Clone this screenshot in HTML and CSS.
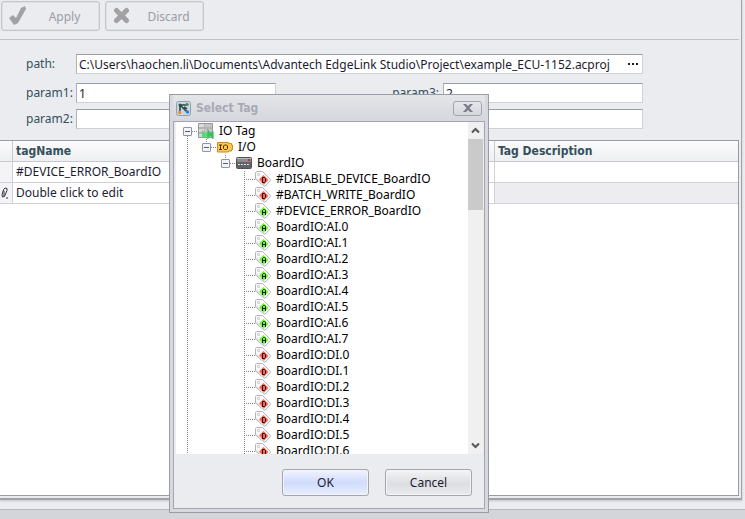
FILE: index.html
```html
<!DOCTYPE html>
<html lang="en">
<head>
<meta charset="utf-8">
<title>Select Tag</title>
<link rel="stylesheet" href="styles.css">
</head>
<body>
<svg class="defs" aria-hidden="true">
  <symbol id="tag" viewBox="0 0 17 16">
    <path d="M.5 1.500 1.500.5H7.500L15.500 8.500V9.500L10.500 15H9L.5 8Z" fill="#fafafa" stroke="#b4b4b4"/>
    <path d="M1.500 7.500 9.500 14" stroke="#d4d4d4"/>
    <circle cx="3.500" cy="3.500" r="1" fill="#fff" stroke="#bbb"/>
    <path d="M8.500 4 13.500 9 9 13.500 4 8.500Z" fill="currentColor"/>
  </symbol>
  <symbol id="tag-d" viewBox="0 0 17 16">
    <use href="#tag" width="17" height="16"/>
    <path d="M7.500 6.500h2l1 1v3l-1 1H7.500Z" fill="none" stroke="#200"/>
  </symbol>
  <symbol id="tag-a" viewBox="0 0 17 16">
    <use href="#tag" width="17" height="16"/>
    <path d="M7.500 12V7.500L8.500 6.500h1l1 1V12M7.500 9.500h3" fill="none" stroke="#020"/>
  </symbol>
</svg>
<main class="window">
  <header class="toolbar">
    <button class="tool" disabled>
      <svg width="18" height="20" viewBox="0 0 18 20"><path d="M1 12 5 9 8 12 13 2 17 0 18 3 10 17 6 19Z" fill="#a2a2a5"/></svg>
      <span>Apply</span>
    </button>
    <button class="tool" disabled>
      <svg width="18" height="20" viewBox="0 0 18 20"><path d="M4.500 4.500 14.500 14.500M14.500 4.500 4.500 14.500" stroke="#a2a2a5" stroke-width="5" stroke-linecap="round"/></svg>
      <span>Discard</span>
    </button>
  </header>
  <form class="form">
    <label for="path">path:</label>
    <div class="path-box">
      <input id="path" value="C:\Users\haochen.li\Documents\Advantech EdgeLink Studio\Project\example_ECU-1152.acproj">
      <button type="button" class="browse" aria-label="Browse"><svg width="11" height="3"><path d="M0 0h2v2H0zM4 0h2v2H4zM8 0h2v2H8z" fill="#1c1c30"/></svg></button>
    </div>
    <label for="p1">param1:</label><input class="box" id="p1" value="1">
    <label class="second" for="p3">param3:</label><input class="box" id="p3" value="2">
    <label for="p2">param2:</label><input class="box" id="p2">
    <label class="second" for="p4">param4:</label><input class="box" id="p4">
  </form>
  <section class="grid">
    <table>
      <colgroup><col class="c-mark"><col class="c-name"><col></colgroup>
      <thead><tr><th></th><th>tagName</th><th>Tag Description</th></tr></thead>
      <tbody>
        <tr><td></td><td>#DEVICE_ERROR_BoardIO</td><td></td></tr>
        <tr class="new"><td><svg width="8" height="12" viewBox="0 0 8 12"><path d="M2.500 2.500 4 1 6 1.500 6 3.500 3.500 9.500 1.500 10 1 8ZM3 3.500 3 9M5 11h2" fill="none" stroke="#333344"/></svg></td><td>Double click to edit</td><td></td></tr>
      </tbody>
    </table>
  </section>
</main>
<footer class="status"></footer>

<section class="dialog" role="dialog" aria-labelledby="title">
  <header class="title">
    <svg width="15" height="15" viewBox="0 0 15 15"><rect x=".5" y=".5" width="14" height="14" rx="2" fill="#c8d8e4" stroke="#90a0b0"/><path d="M4 10V4L10 4M5 5 11 11M8 6 11 8" fill="none" stroke="#34404c" stroke-width="1.600"/><circle cx="4" cy="4" r="1.500" fill="#285c34"/><circle cx="11" cy="3.500" r="1.600" fill="#3c8c3c"/><circle cx="3.600" cy="11.500" r="1.700" fill="#e8902c"/><circle cx="11.500" cy="11" r="1.700" fill="#2484c4"/></svg>
    <h1 id="title">Select Tag</h1>
    <button class="close" aria-label="Close"><svg width="10" height="8" viewBox="0 0 10 8"><path d="M0 0h3l2 2 2-2h3L6.500 4 10 8H7L5 6 3 8H0L3.500 4Z" fill="#7c7d88"/></svg></button>
  </header>
  <div class="content">
    <div class="viewport">
      <ul class="tree root" role="tree">
        <li class="open"><div class="row"><button class="toggle" aria-label="Collapse"></button>
          <svg width="17" height="16" viewBox="0 0 17 16"><path d="M.5.500h14v14H.5Z" fill="#b4b4b6" stroke="#98989a"/><path d="M1 1h5v3H1zM1 6h5v3H1zM1 11h5v3H1z" fill="#dadadc"/><path d="M7 1h7v3H7zM7 6h7v3H7zM7 11h7v3H7z" fill="#c6c6c8"/><path d="M5 14.500V9.500L9.500 14.500V10" fill="none" stroke="#4ce070" stroke-width="2.200"/><path d="M10.500 14.500V9L14.500 14V8.500" fill="none" stroke="#34c058" stroke-width="2.200"/></svg><span>IO Tag</span></div>
          <ul class="tree">
            <li class="open"><div class="row"><button class="toggle" aria-label="Collapse"></button>
              <svg width="17" height="16" viewBox="0 0 17 16"><path d="M.5 3.500h11v1h3v1.500h1v4.500h-1v1.500h-3v1H.5Z" fill="#fcc850" stroke="#d08c18"/><path d="M2 6h3M3.500 6v4.500M2 10.500h3M7.500 6h2l1 1v2.500l-1 1h-2l-1-1V7Z" fill="none" stroke="#503000"/></svg><span>I/O</span></div>
              <ul class="tree">
                <li class="open"><div class="row"><button class="toggle" aria-label="Collapse"></button>
                  <svg width="17" height="16" viewBox="0 0 17 16"><rect x=".5" y="2.500" width="15" height="11" rx="1" fill="#8c8d92" stroke="#505156"/><path d="M1 3.500h14" stroke="#b8b9be"/><path d="M1 7h14v6H1z" fill="#626368"/><path d="M2 9.500h2M5 9.500h2M8 9.500h2M11 9.500h2" stroke="#e2e2e4" stroke-width="1"/><path d="M12 4h2v2h-2z" fill="#e02424"/></svg><span>BoardIO</span></div>
                  <ul class="tree leaves" id="leaves"></ul>
                </li>
              </ul>
            </li>
          </ul>
        </li>
      </ul>
    </div>
    <div class="scroll">
      <button aria-label="Scroll up"><svg width="9" height="7" viewBox="0 0 9 7"><path d="M1 5.500 4.500 2 8 5.500" fill="none" stroke="#55565a" stroke-width="2"/></svg></button>
      <div class="thumb"></div>
      <button aria-label="Scroll down"><svg width="9" height="7" viewBox="0 0 9 7"><path d="M1 1.500 4.500 5 8 1.500" fill="none" stroke="#55565a" stroke-width="2"/></svg></button>
    </div>
    <div class="actions"><button class="btn primary">OK</button><button class="btn">Cancel</button></div>
  </div>
</section>
<script src="tree.js"></script>
</body>
</html>
```
FILE: styles.css
```css
* { box-sizing: border-box; }
body, input, button { font-family: Tahoma, "Noto Sans", sans-serif; font-size: 12px; color: #1c1c30; }
body { margin: 0; min-height: 100vh; display: flex; flex-direction: column; background: #ebecef; overflow: hidden; }
svg { display: block; flex: none; }
.defs { position: absolute; width: 0; height: 0; }
button { margin: 0; padding: 0; }

.window { flex: 1; display: flex; flex-direction: column; margin: 0 3px 9px 0; border: solid #a0a1ac; border-width: 0 1px 2px 0; padding: 0 2px 2px 0; box-shadow: 0 1px 2px #c4c5cc; }
.toolbar { display: flex; gap: 5px; height: 40px; padding: 1px 1px 0; border-bottom: 1px solid #c0c1c8; }
.tool { display: flex; align-items: center; width: 99px; height: 30px; padding: 0 6px; border: 1px solid #c6c7cc; border-radius: 3px; background: #ebecef; box-shadow: inset 0 0 0 1px #dfe0e4; color: #9a9ba8; }
.tool span { flex: 1; text-align: center; padding-left: 10px; }

.form { display: grid; grid-template-columns: 50px 200px 1fr 200px; grid-template-rows: 23px 20px 20px; row-gap: 6px; margin: 14px 96px 11px 26px; color: #34505a; line-height: 20px; }
.form input { min-width: 0; outline: 0; }
.path-box { grid-column: 2 / 5; display: flex; height: 20px; }
.path-box input { flex: 1; border: 0; padding: 0 2px; background: none; }
.path-box, .box { border: 1px solid #d0d1d8; border-top-color: #9a9ba6; border-left-color: #b0b1bb; background: #fff; }
.box { padding: 0 2px; }
.second { justify-self: end; padding-right: 4px; }
.browse { width: 18px; border: 0; background: none; display: flex; justify-content: center; align-items: center; }

.grid { flex: 1; background: #fff; border: 1px solid #9a9ba6; border-left: 0; }
table { width: 100%; border-collapse: separate; border-spacing: 0; table-layout: fixed; }
.c-mark { width: 13px; }
.c-name { width: 482px; }
th, td { height: 21px; padding: 0 3px; text-align: left; border: solid #d0d1d8; border-width: 0 1px 1px 0; white-space: nowrap; line-height: 18px; }
th { background: linear-gradient(#fbfbfc, #eeeff1); color: #34505a; border-color: #c8c9d0; font-family: Tahoma, "DejaVu Sans Condensed", sans-serif; }
th:last-child, td:last-child { border-right: 0; }
td:first-child { background: #f4f4f7; padding: 0 1px; }
.new td:last-child { background: #ededf0; }

.status { height: 10px; background: #d4d5db; border-top: 1px solid #b8b9c0; }

.dialog { position: absolute; left: 169px; top: 94px; width: 320px; padding: 0 3px 3px; background: #d8d9df; border: 1px solid #9a9ba6; }
.title { display: flex; align-items: center; height: 26px; padding: 0 3px 0 3px; background: linear-gradient(#e4e5e9, #d6d7dd); }
h1 { flex: 1; margin: 0; padding-left: 5px; font: bold 12px Tahoma, "DejaVu Sans Condensed", sans-serif; color: #a8a9b4; }
.close { display: flex; align-items: center; justify-content: center; width: 29px; height: 15px; border: 1px solid #a4a5b0; border-radius: 3px; background: linear-gradient(#e6e7eb, #d6d7dc); }
.content { display: grid; grid-template-columns: 1fr 15px; grid-template-rows: 332px auto; padding: 0 1px 0 2px; border: 1px solid #a4a5b0; background: #ebecef; }
.viewport { overflow: hidden; background: #fff; color: #000; }
.tree { list-style: none; margin: 0; padding: 0 0 0 19px; }
.root { padding: 1px 0 0 7px; background: repeating-linear-gradient(#808080 0 1px, transparent 1px 2px) 11px 8px / 1px 100% no-repeat; }
.leaves { margin-left: 12px; padding-left: 0; background: repeating-linear-gradient(#808080 0 1px, transparent 1px 2px) 11px 0 / 1px 100% no-repeat; }
.row { display: flex; align-items: center; height: 16px; white-space: nowrap; line-height: 16px; }
.row span { padding-left: 4px; }
.toggle { flex: none; width: 9px; height: 9px; margin-right: 6px; border: 1px solid #9094a0; border-radius: 1px; background: linear-gradient(#3c5cb4, #3c5cb4) 1px 3px / 5px 1px no-repeat, #f4f4f6; }
.open > .row { background: repeating-linear-gradient(90deg, #808080 0 1px, transparent 1px 2px) 9px 8px / 5px 1px no-repeat; }
.tree .tree > .open > .row { background: repeating-linear-gradient(90deg, #808080 0 1px, transparent 1px 2px) 9px 8px / 5px 1px no-repeat, repeating-linear-gradient(#808080 0 1px, transparent 1px 2px) 4px 0 / 1px 4px no-repeat; }
.leaves .row { padding-left: 22px; background: repeating-linear-gradient(90deg, #808080 0 1px, transparent 1px 2px) 11px 8px / 11px 1px no-repeat; }
.d { color: #fa6450; }
.a { color: #70f434; }
.scroll { display: flex; flex-direction: column; background: #f0f0f0; }
.scroll button { height: 17px; border: 0; background: none; display: flex; align-items: center; justify-content: center; }
.thumb { height: 71px; background: #cacaca; margin-bottom: auto; }
.actions { grid-column: 1 / 3; display: flex; justify-content: flex-end; gap: 16px; padding: 15px 11px 12px; }
.btn { width: 87px; height: 27px; border: 1px solid #a4a5b0; border-radius: 3px; background: linear-gradient(#f4f4f6, #dddee3 55%, #e9eaed); box-shadow: inset 0 0 0 1px #f4f4f7; }
.primary { background: linear-gradient(#f0f4ff, #d0dcfc 50%, #e8eefe); }
```
FILE: tree.js
```js
const names = [["d", "#DISABLE_DEVICE_BoardIO"], ["d", "#BATCH_WRITE_BoardIO"], ["a", "#DEVICE_ERROR_BoardIO"]];
for (let i = 0; i < 8; i++) names.push(["a", "BoardIO:AI." + i]);
for (let i = 0; i < 7; i++) names.push(["d", "BoardIO:DI." + i]);
document.getElementById("leaves").innerHTML = names.map(([kind, name]) =>
  `<li><div class="row"><svg class="${kind}" width="17" height="16"><use href="#tag-${kind}"/></svg><span>${name}</span></div></li>`).join("");
```
